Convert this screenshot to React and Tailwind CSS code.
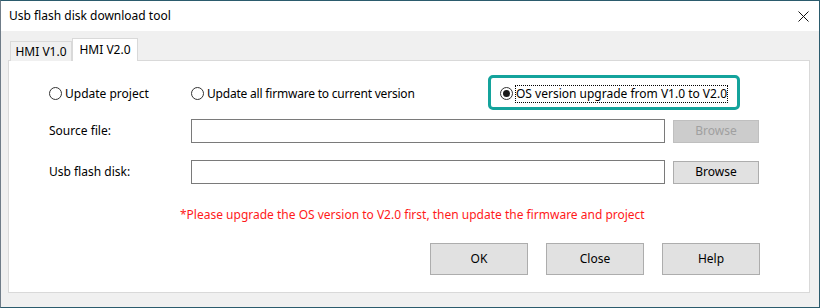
import { useState } from "react";

const font = { fontFamily: '"Noto Sans", "Open Sans", sans-serif' };

function Radio({ checked, label, focused }) {
  return (
    <div className="flex items-center">
      <span className="w-[13px] h-[13px] rounded-full border border-[#333333] bg-white flex items-center justify-center shrink-0">
        {checked && <span className="w-[7px] h-[7px] rounded-full bg-[#1a1a1a]" />}
      </span>
      <span
        className={
          "ml-[3px] leading-[16px] " +
          (focused ? "outline outline-1 outline-dotted outline-black" : "")
        }
      >
        {label}
      </span>
    </div>
  );
}

function Button({ children, disabled, className = "" }) {
  return (
    <button
      className={
        "flex items-center justify-center border " +
        (disabled
          ? "bg-[#cccccc] border-[#bfbfbf] text-[#a0a0a0] "
          : "bg-[#e1e1e1] border-[#adadad] text-black ") +
        className
      }
    >
      {children}
    </button>
  );
}

export default function App() {
  const [tab] = useState(2);

  return (
    <div
      className="w-[820px] h-[308px] flex flex-col border-t border-r border-b border-[#2b5b6d] border-l border-l-[#6f7c88] text-[12px] text-black bg-[#f0f0f0]"
      style={font}
    >
      {/* Title bar */}
      <div className="h-[30px] bg-white flex items-center justify-between pl-[8px] pr-[9px] shrink-0">
        <span className="text-[12px]">Usb flash disk download tool</span>
        <svg width="11" height="11" viewBox="0 0 11 11" className="mr-[1px]">
          <path d="M0.5 0.5 L10.5 10.5 M10.5 0.5 L0.5 10.5" stroke="#111" strokeWidth="1" />
        </svg>
      </div>

      {/* Body */}
      <div className="flex-1 pl-[7px] pt-[7px]">
        {/* Tabs */}
        <div className="flex items-end h-[22px] pl-[2px]">
          <div className="h-[20px] w-[62px] border border-b-0 border-[#d9d9d9] bg-[#f0f0f0] flex items-center justify-center mb-[-1px] relative">
            HMI V1.0
          </div>
          <div
            className={
              "h-[23px] w-[66px] border border-b-0 border-[#d9d9d9] bg-white flex items-center justify-center mb-[-1px] relative z-10 " +
              (tab === 2 ? "" : "")
            }
          >
            HMI V2.0
          </div>
        </div>

        {/* Panel */}
        <div className="w-[802px] h-[233px] border border-[#d9d9d9] bg-white pt-[14px]">
          {/* Radios */}
          <div className="flex items-center h-[35px] pt-[2px]">
            <div className="w-[182px] pl-[40px]">
              <Radio label="Update project" />
            </div>
            <div className="w-[297px] tracking-[-0.2px]">
              <Radio label="Update all firmware to current version" />
            </div>
            <div className="w-[252px] h-[35px] mt-[-2px] border-[3px] border-[#14a39c] rounded-[5px] flex items-center pl-[9px] pt-[2px]">
              <Radio checked focused label="OS version upgrade from V1.0 to V2.0" />
            </div>
          </div>

          {/* Source file */}
          <div className="flex items-center mt-[9px] h-[24px]">
            <span className="w-[182px] pl-[40px]">Source file:</span>
            <div className="w-[474px] h-[24px] border border-[#7a7a7a] bg-white" />
            <Button disabled className="ml-[8px] w-[86px] h-[23px]">
              Browse
            </Button>
          </div>

          {/* Usb flash disk */}
          <div className="flex items-center mt-[17px] h-[24px]">
            <span className="w-[182px] pl-[40px]">Usb flash disk:</span>
            <div className="w-[474px] h-[24px] border border-[#7a7a7a] bg-white" />
            <Button className="ml-[8px] w-[86px] h-[23px]">Browse</Button>
          </div>

          {/* Note */}
          <div className="mt-[23px] pl-[171px] text-[#ff1a1a] leading-[16px]">
            *Please upgrade the OS version to V2.0 first, then update the firmware and project
          </div>

          {/* Actions */}
          <div className="flex mt-[20px] pl-[421px] gap-[17px]">
            <Button className="w-[98px] h-[32px]">OK</Button>
            <Button className="w-[98px] h-[32px] ml-[1px]">Close</Button>
            <Button className="w-[98px] h-[32px] ml-[1px]">Help</Button>
          </div>
        </div>
      </div>
    </div>
  );
}
